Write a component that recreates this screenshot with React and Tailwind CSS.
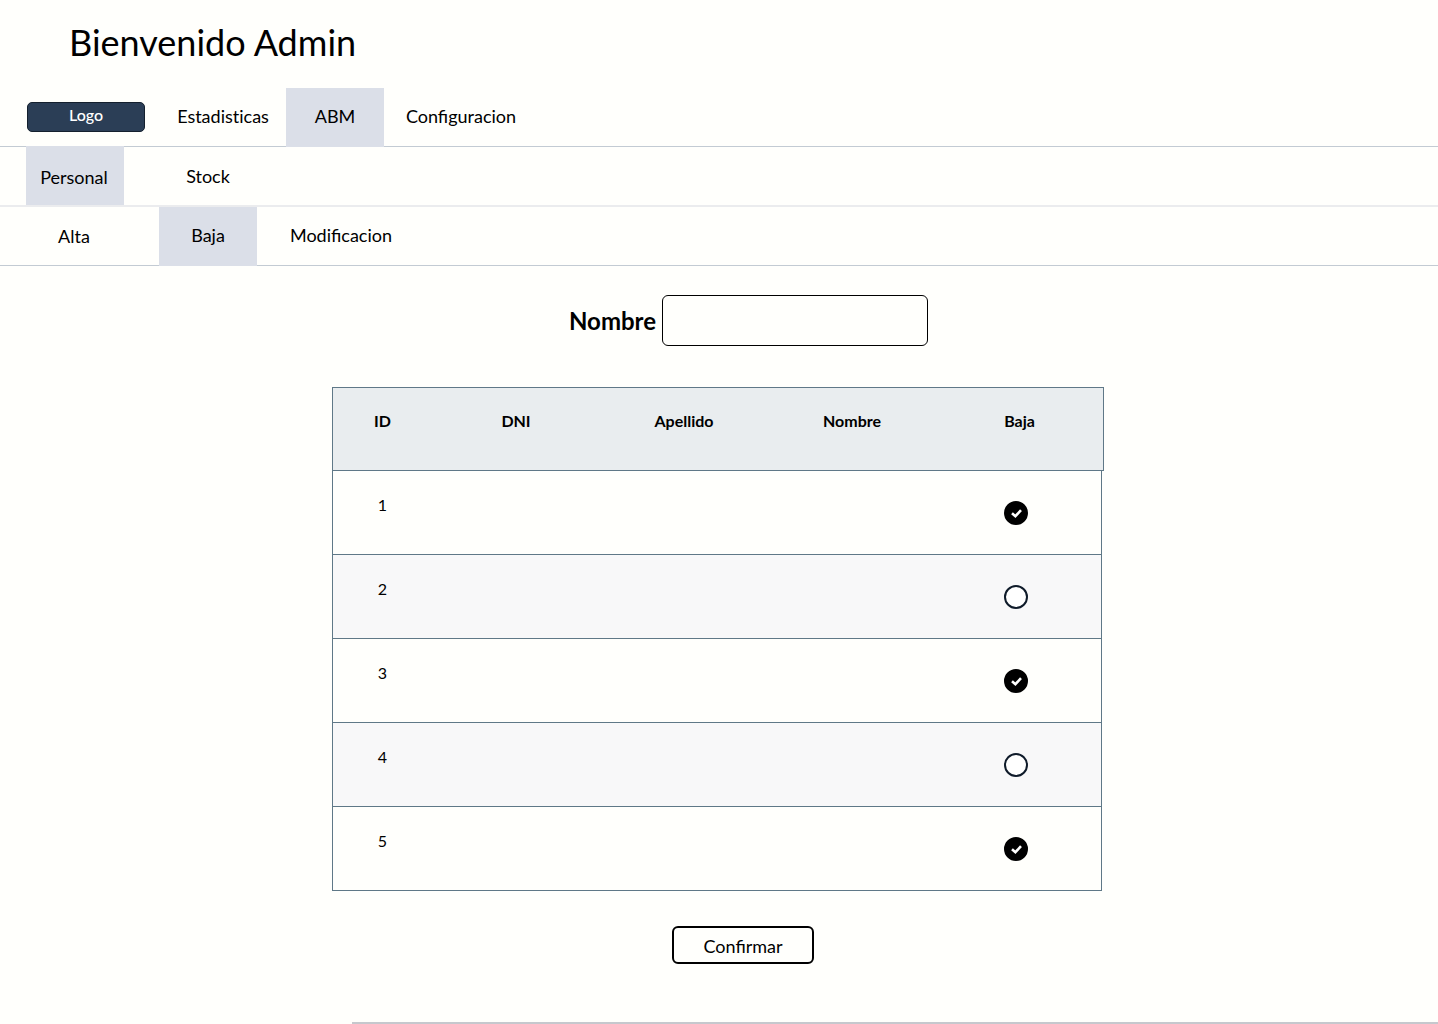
import React from "react";

const columns = ["ID", "DNI", "Apellido", "Nombre", "Baja"];

const people = [
  { id: 1, selected: true },
  { id: 2, selected: false },
  { id: 3, selected: true },
  { id: 4, selected: false },
  { id: 5, selected: true },
];

function Tab({ label, active = false, className = "" }) {
  return (
    <a
      href="#"
      aria-current={active ? "page" : undefined}
      className={`flex w-[98px] shrink-0 items-center justify-center whitespace-nowrap ${
        active ? "bg-[#dbdfe8]" : ""
      } ${className}`}
    >
      {label}
    </a>
  );
}

function RoundCheck({ label, defaultChecked }) {
  return (
    <label className="inline-grid align-middle">
      <input
        type="checkbox"
        aria-label={label}
        defaultChecked={defaultChecked}
        className="peer col-start-1 row-start-1 size-6 appearance-none rounded-full border-2 border-[#0f1b2a] bg-white checked:border-black checked:bg-black"
      />
      <svg
        viewBox="0 0 24 24"
        className="pointer-events-none invisible col-start-1 row-start-1 size-6 peer-checked:visible"
        fill="none"
        stroke="white"
        strokeWidth="2.6"
        aria-hidden="true"
      >
        <path d="M8 12.2 L11.4 15.2 L17 9.2" />
      </svg>
    </label>
  );
}

export default function App() {
  return (
    <div className="min-h-screen bg-[#fffffc] font-['Lato',sans-serif] text-lg text-black">
      <header>
        <h1 className="h-[88px] pt-5 pl-[69px] text-4xl leading-11">Bienvenido Admin</h1>

        <nav aria-label="Principal" className="flex h-[59px] border-b border-[#c3cbd3] pl-[27px]">
          <button
            type="button"
            className="mt-3.5 mr-[29px] h-[30px] w-[118px] shrink-0 rounded-[5px] border border-[#14202e] bg-[#2b3e56] pb-1 text-base leading-6 font-medium text-white"
          >
            Logo
          </button>
          <Tab label="Estadisticas" className="pb-0.5 [font-variant-ligatures:none]" />
          <Tab label="ABM" active className="-mb-px ml-3.5 pb-1" />
          <Tab label="Configuracion" className="ml-7 pb-0.5" />
        </nav>

        <nav aria-label="ABM" className="flex h-[60px] gap-[35px] border-b-2 border-[#ebecee] pl-[26px]">
          <Tab label="Personal" active className="-mt-px pt-0.5 pr-0.5" />
          <Tab label="Stock" />
        </nav>

        <nav aria-label="Personal" className="flex h-[59px] gap-[35px] border-b border-[#c3cbd3] pl-[26px]">
          <Tab label="Alta" className="pr-0.5" />
          <Tab label="Baja" active className="-mb-px pb-1" />
          <Tab label="Modificacion" className="pb-0.5" />
        </nav>
      </header>

      <main className="pt-[29px]">
        <form onSubmit={(e) => e.preventDefault()}>
          <div className="flex items-center justify-center gap-1.5 pl-[59px]">
            <label htmlFor="nombre" className="text-2xl font-bold">
              Nombre
            </label>
            <input
              id="nombre"
              type="text"
              className="h-[51px] w-[266px] rounded-md border border-black bg-transparent px-3"
            />
          </div>

          <div className="mt-[41px] flex justify-center pr-0.5">
            <table className="w-[772px] table-fixed border-separate border-spacing-0 text-center text-base leading-6">
              <colgroup>
                <col className="w-[100px]" />
                <col className="w-[168px]" />
                <col className="w-[168px]" />
                <col className="w-[168px]" />
                <col className="w-[166px]" />
                <col className="w-0.5" />
              </colgroup>
              <thead>
                <tr className="h-[84px]">
                  {columns.map((name, i) => (
                    <th
                      key={name}
                      scope="col"
                      colSpan={i === 4 ? 2 : 1}
                      className="border-y border-[#5f7887] bg-[#e9edef] pt-[21px] align-top font-bold first:border-l last:border-r"
                    >
                      {name}
                    </th>
                  ))}
                </tr>
              </thead>
              <tbody>
                {people.map((person) => (
                  <tr key={person.id} className="group h-[84px]">
                    <td className="border-b border-l border-[#5f7887] pt-[22px] align-top group-even:bg-[#f8f8f9]">
                      {person.id}
                    </td>
                    <td className="border-b border-[#5f7887] group-even:bg-[#f8f8f9]" />
                    <td className="border-b border-[#5f7887] group-even:bg-[#f8f8f9]" />
                    <td className="border-b border-[#5f7887] group-even:bg-[#f8f8f9]" />
                    <td className="border-r border-b border-[#5f7887] pr-1.5 align-middle group-even:bg-[#f8f8f9]">
                      <RoundCheck label={`Baja ${person.id}`} defaultChecked={person.selected} />
                    </td>
                  </tr>
                ))}
              </tbody>
            </table>
          </div>

          <div className="mt-[35px] flex justify-center pl-12">
            <button
              type="submit"
              className="h-[38px] w-[142px] rounded-md border-2 border-black bg-transparent pt-0.5 leading-6"
            >
              Confirmar
            </button>
          </div>
        </form>
      </main>

      <hr className="mt-[58px] ml-[352px] border-t-2 border-[#c6c8cd]" />
    </div>
  );
}
